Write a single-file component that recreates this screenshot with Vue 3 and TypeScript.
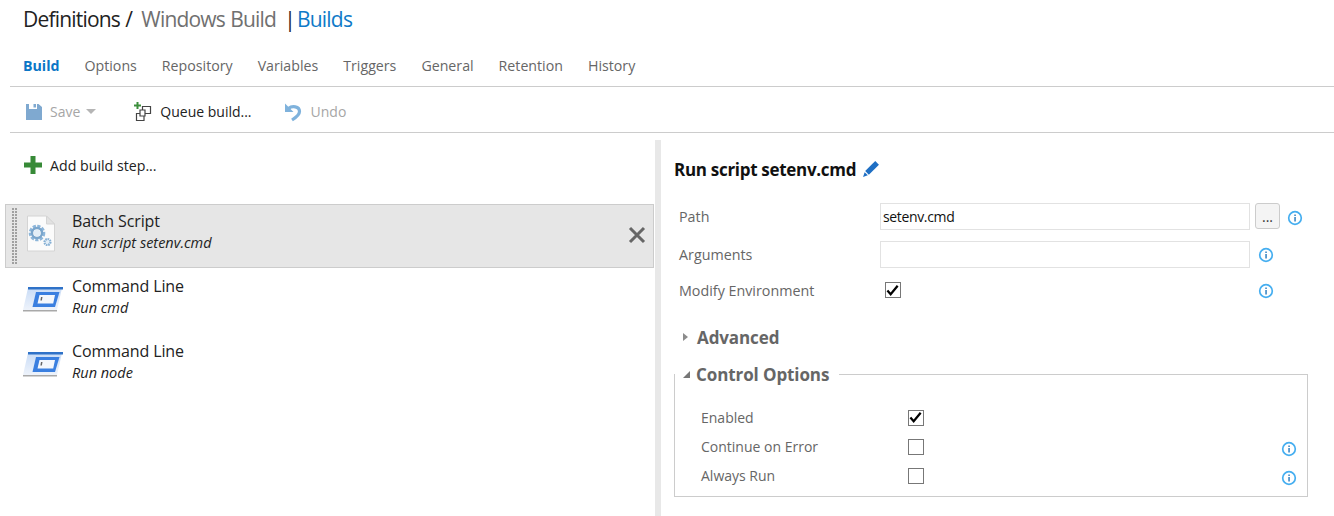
<template>
  <div class="page">
    <header class="head">
      <span class="crumb">Definitions / </span><span class="crumb-name">Windows Build</span><span class="crumb pipe"> |</span><span class="crumb-link">Builds</span>
    </header>
    <nav class="tabs">
      <span v-for="(tab, i) in tabs" :key="tab" class="tab" :class="{ active: i === 0 }">{{ tab }}</span>
    </nav>
    <div class="toolbar">
      <span class="tool disabled save">
        <svg width="18" height="18" viewBox="0 0 18 18"><path d="M1 1h3v5h8V1h1.500L17 4v13H1z" fill="#7fa9d0" /><rect x="8.500" y="1" width="2.500" height="3.500" fill="#7fa9d0" /></svg>
        <span>Save</span>
        <i class="caret"></i>
      </span>
      <span class="tool queue">
        <svg width="19" height="20" viewBox="0 0 19 20">
          <path d="M3.500 0v2.500H1v2h2.500V7h2V4.500H8v-2H5.500V0z" fill="#3c8f3c" />
          <path d="M9.500 4.500h8v7h-8zM3.500 11.500h7.500v7H3.500z" fill="none" stroke="#444" stroke-width="1.200" />
          <path d="M7 8h5v6H7z" fill="#fff" stroke="#444" stroke-width="1.200" />
        </svg>
        <span>Queue build...</span>
      </span>
      <span class="tool disabled undo">
        <svg width="18" height="20" viewBox="0 0 18 20">
          <path d="M1 1.500V10h8.500z" fill="#7fb2dc" />
          <path d="M4.500 6.500C8 3.500 15.500 4 15.500 9.500c0 3.500-3.500 6-7.500 8.500" fill="none" stroke="#7fb2dc" stroke-width="3.200" />
        </svg>
        <span>Undo</span>
      </span>
    </div>
    <div class="body">
      <section class="left">
        <div class="add">
          <svg width="18" height="18" viewBox="0 0 18 18"><path d="M6.500 0h5v6.500H18v5h-6.500V18h-5v-6.500H0v-5h6.500z" fill="#378a37" /></svg>
          <span>Add build step...</span>
        </div>
        <div class="steps">
          <div v-for="(step, i) in steps" :key="i" class="step" :class="{ selected: step.selected }">
            <i v-if="step.selected" class="grip"></i>
            <svg v-if="step.kind === 'batch'" class="ico" width="30" height="37" viewBox="0 0 30 37">
              <path d="M1.500 1h19l8 8v27h-27z" fill="#fbfbfb" stroke="#d4d4d4" />
              <path d="M20.500 1v8h8z" fill="#e2e2e2" stroke="#d4d4d4" />
              <circle cx="11" cy="18" r="6.500" fill="none" stroke="#8db6da" stroke-width="3.600" stroke-dasharray="3 1.300" />
              <circle cx="11" cy="18" r="5" fill="none" stroke="#7ba6cc" stroke-width="2.400" />
              <circle cx="11" cy="18" r="3.200" fill="#e3eef7" />
              <circle cx="21.500" cy="27" r="3" fill="#e3eef7" stroke="#86b0d4" stroke-width="2.200" stroke-dasharray="1.600 .7" />
            </svg>
            <svg v-else class="ico" width="40" height="26" viewBox="0 0 40 26">
              <path d="M5 2h34l-5 22H0z" fill="url(#cmd-back)" />
              <path d="M5 1h35v2.500H5z" fill="#2f72c8" />
              <path d="M13 6h23.500L32 21H9.500z" fill="#3a7fe0" />
              <path d="M16.500 9h15.500l-1.800 8.500H14.500z" fill="#f4f7fc" />
              <path d="M0 24h34v1.500H0z" fill="#a9a9a9" />
              <path d="M18 11h1.500l-.6 3.500h-1.500z" fill="#666" />
            </svg>
            <div class="step-text">
              <div class="step-name">{{ step.name }}</div>
              <div class="step-desc">{{ step.desc }}</div>
            </div>
            <svg v-if="step.selected" class="remove" width="18" height="18" viewBox="0 0 18 18"><path d="M2 2l14 14M16 2L2 16" stroke="#666" stroke-width="3" /></svg>
          </div>
        </div>
      </section>
      <div class="splitter"></div>
      <section class="right">
        <h2 class="title">
          Run script setenv.cmd
          <svg width="18" height="18" viewBox="0 0 17 17"><path d="M12.500 1l3.500 3.500-9.500 9.500L3 10.500z" fill="#1f6fc4" /><path d="M2.500 11.500l3 3L1 16z" fill="#1f6fc4" /></svg>
        </h2>
        <div class="form">
          <div class="row">
            <label>Path</label>
            <input class="field" value="setenv.cmd" />
            <button class="dots">...</button>
            <svg class="info path-info" width="16" height="16" viewBox="0 0 16 16"><use href="#info-i" /></svg>
          </div>
          <div class="row">
            <label>Arguments</label>
            <input class="field" />
            <svg class="info" width="16" height="16" viewBox="0 0 16 16"><use href="#info-i" /></svg>
          </div>
          <div class="row env">
            <label>Modify Environment</label>
            <span class="check on"><svg width="15" height="13" viewBox="0 0 15 13"><path d="M1.500 6.500l3.500 4 7.500-9" fill="none" stroke="#000" stroke-width="2.400" /></svg></span>
            <svg class="info env-info" width="16" height="16" viewBox="0 0 16 16"><use href="#info-i" /></svg>
          </div>
        </div>
        <div class="advanced">
          <i class="tri-open"></i>
          <span>Advanced</span>
        </div>
        <fieldset class="options">
          <legend><i class="tri-down"></i>Control Options</legend>
          <div v-for="opt in options" :key="opt.label" class="opt">
            <label>{{ opt.label }}</label>
            <span class="check" :class="{ on: opt.on }"><svg v-if="opt.on" width="15" height="13" viewBox="0 0 15 13"><path d="M1.500 6.500l3.500 4 7.500-9" fill="none" stroke="#000" stroke-width="2.400" /></svg></span>
            <svg v-if="opt.info" class="info opt-info" width="16" height="16" viewBox="0 0 16 16"><use href="#info-i" /></svg>
          </div>
        </fieldset>
      </section>
    </div>
    <svg width="0" height="0" class="defs">
      <defs>
        <linearGradient id="cmd-back" x1="0" y1="0" x2="0" y2="1">
          <stop offset="0" stop-color="#c9dcf6" />
          <stop offset="1" stop-color="#eef3fb" />
        </linearGradient>
      </defs>
      <symbol id="info-i" viewBox="0 0 16 16">
        <circle cx="8" cy="8" r="6.300" fill="#fff" stroke="#45aef0" stroke-width="1.700" />
        <rect x="7.300" y="4.500" width="1.500" height="1.500" fill="#2f7fc0" />
        <rect x="7.300" y="7" width="1.500" height="4.500" fill="#2f7fc0" />
      </symbol>
    </svg>
  </div>
</template>

<script setup lang="ts">
interface Step {
  name: string;
  desc: string;
  kind: string;
  selected?: boolean;
}

const tabs = ['Build', 'Options', 'Repository', 'Variables', 'Triggers', 'General', 'Retention', 'History'];

const steps: Step[] = [
  { name: 'Batch Script', desc: 'Run script setenv.cmd', kind: 'batch', selected: true },
  { name: 'Command Line', desc: 'Run cmd', kind: 'cmd' },
  { name: 'Command Line', desc: 'Run node', kind: 'cmd' }
];

const options = [
  { label: 'Enabled', on: true, info: false },
  { label: 'Continue on Error', on: false, info: true },
  { label: 'Always Run', on: false, info: true }
];
</script>

<style>
html,
body {
  margin: 0;
  background: #fff;
  overflow: hidden;
}
</style>

<style scoped>
.page {
  width: 1334px;
  height: 516px;
  overflow: hidden;
  font-family: 'Open Sans', 'Noto Sans', sans-serif;
  font-size: 14px;
  color: #222;
}
.head {
  height: 37px;
  line-height: 39px;
  padding-left: 23px;
  font-size: 21px;
  letter-spacing: -0.8px;
  word-spacing: 0.5px;
  white-space: pre;
  color: #222;
}
.crumb-name {
  color: #707070;
  margin-left: 4px;
}
.pipe {
  margin-left: 3px;
  margin-right: 2px;
}
.crumb-link {
  color: #0f7ac8;
}
.tabs {
  display: flex;
  gap: 25px;
  height: 50px;
  align-items: center;
  padding: 8px 0 0 13px;
  box-sizing: border-box;
  margin-left: 10px;
  border-bottom: 1px solid #ccc;
  font-size: 14.2px;
  color: #666;
}
.tab.active {
  color: #0a76c6;
  font-weight: 700;
}
.toolbar {
  display: flex;
  align-items: center;
  height: 46px;
  box-sizing: border-box;
  margin-left: 10px;
  padding: 4px 0 0 15px;
  border-bottom: 1px solid #ccc;
  color: #222;
}
.tool {
  display: flex;
  align-items: center;
  gap: 7px;
}
.disabled {
  color: #a6a6a6;
}
.caret {
  width: 0;
  height: 0;
  border: 5px solid transparent;
  border-top: 5px solid #b5b5b5;
  border-bottom: 0;
  margin-left: -1px;
}
.queue {
  margin-left: 37px;
  gap: 8px;
}
.undo {
  margin-left: 32px;
  gap: 9px;
}
.body {
  display: flex;
  height: 383px;
}
.left {
  width: 655px;
  padding-top: 7px;
  box-sizing: border-box;
}
.add {
  display: flex;
  align-items: center;
  gap: 8px;
  height: 36px;
  padding-left: 24px;
  margin-bottom: 21px;
  margin-top: 7px;
}
.add span {
  font-size: 14.2px;
}
.steps {
  margin-left: 5px;
  margin-right: 1px;
}
.step {
  position: relative;
  display: flex;
  align-items: center;
  height: 65px;
  padding: 0 0 8px 17px;
  box-sizing: border-box;
}
.step.selected {
  background: #e6e6e6;
  border: 1px solid #ccc;
  height: 64px;
  margin-bottom: 1px;
  padding: 0 0 6px 16px;
}
.step-text {
  margin-top: -2px;
}
.grip {
  position: absolute;
  left: 6px;
  top: 3px;
  bottom: 3px;
  width: 6px;
  background-image: radial-gradient(circle at 1px 1px, #a0a0a0 1px, transparent 1px);
  background-size: 3px 3px;
}
.ico {
  flex: none;
}
.step:not(.selected) .ico {
  margin-left: 1px;
  margin-right: 9px;
  margin-top: 3px;
}
.step.selected .ico {
  margin-left: 4px;
  margin-right: 16px;
}
.step-name {
  font-size: 16px;
  line-height: 21px;
  letter-spacing: -0.1px;
  color: #222;
}
.step-desc {
  font-size: 14.5px;
  line-height: 21px;
  font-style: italic;
  color: #222;
}
.remove {
  position: absolute;
  right: 7px;
  top: 21px;
}
.splitter {
  width: 6px;
  background: #e8e8e8;
  margin-top: 7px;
}
.right {
  flex: 1;
  padding-left: 13px;
  padding-top: 23px;
}
.title {
  display: flex;
  align-items: center;
  gap: 6px;
  height: 26px;
  margin: 0;
  font-size: 17px;
  font-weight: 700;
  color: #111;
  letter-spacing: -0.3px;
}
.form {
  margin-top: 15px;
  padding-left: 5px;
}
.row {
  display: flex;
  align-items: center;
  height: 38px;
  color: #666;
  font-size: 14.3px;
}
.row.env {
  height: 34px;
}
.row label {
  width: 201px;
}
.field {
  width: 370px;
  height: 27px;
  box-sizing: border-box;
  border: 1px solid #e2e2e2;
  padding: 0 2px;
  font: inherit;
  font-size: 14px;
  letter-spacing: -0.35px;
  color: #111;
  outline: none;
}
.dots {
  width: 25px;
  height: 26px;
  margin-left: 5px;
  padding: 0;
  border: 1px solid #ccc;
  border-radius: 3px;
  background: #f4f4f4;
  font: inherit;
  font-size: 14px;
  color: #333;
}
.info {
  margin-left: 8px;
  margin-top: 2px;
  flex: none;
}
.path-info {
  margin-left: 7px;
  margin-top: 4px;
}
.env-info {
  margin-left: 357px;
}
.check {
  display: inline-flex;
  align-items: center;
  justify-content: center;
  width: 14px;
  height: 14px;
  border: 1px solid #777;
  box-sizing: content-box;
  background: #fff;
}
.env .check {
  margin-left: 5px;
}
.advanced {
  display: flex;
  align-items: center;
  margin-top: 16px;
  height: 28px;
  padding-left: 9px;
  font-size: 17px;
  font-weight: 700;
  letter-spacing: -0.1px;
  color: #666;
}
.tri-open {
  width: 0;
  height: 0;
  border-left: 5px solid #8c8c8c;
  border-top: 4px solid transparent;
  border-bottom: 4px solid transparent;
  margin-right: 9px;
}
.options {
  width: 634px;
  height: 137px;
  box-sizing: border-box;
  margin: 9px 0 0;
  padding: 0 0 0 26px;
  border: 1px solid #ccc;
  min-width: 0;
}
.options legend {
  display: flex;
  align-items: center;
  padding: 0 10px 0 8px;
  margin-left: -26px;
  font-size: 17px;
  font-weight: 700;
  letter-spacing: -0.1px;
  color: #666;
  height: 28px;
}
.tri-down {
  width: 0;
  height: 0;
  border-right: 7px solid #777;
  border-top: 7px solid transparent;
  margin-right: 6px;
}
.opt {
  display: flex;
  align-items: center;
  height: 29px;
  color: #666;
}
.opt:first-of-type {
  margin-top: 15px;
}
.opt label {
  width: 207px;
}
.opt-info {
  margin-left: 357px;
  margin-top: 4px;
}
.defs {
  position: absolute;
}
</style>
